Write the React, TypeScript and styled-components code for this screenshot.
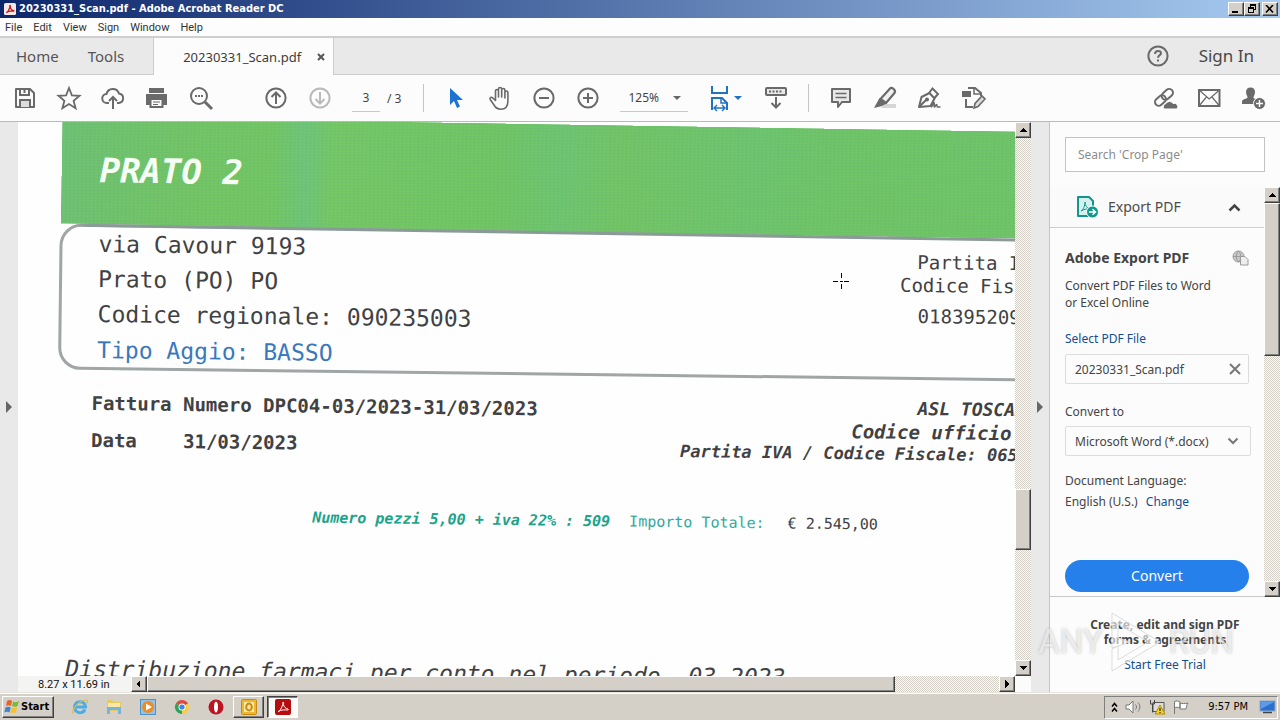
import React from "react";
import styled, { createGlobalStyle, css } from "styled-components";

const ui = `"Noto Sans", "Open Sans", sans-serif`;
const sys = `"DejaVu Sans Condensed", "Noto Sans", sans-serif`;
const face = "#d4d0c8";
const grey = "#6a6a6a";

const Global = createGlobalStyle`
  * { box-sizing: border-box; }
  body { margin: 0; font-family: ${ui}; color: #444; background: #fcfcfc; overflow: hidden; }
  button, input, select { font: inherit; color: inherit; }
  a { text-decoration: none; }
  p, h1, h2 { margin: 0; }
`;

const raised = css`
  background: ${face};
  border: 1px solid;
  border-color: #fff #404040 #404040 #fff;
  box-shadow: inset -1px -1px 0 #808080;
`;

const Window = styled.div`
  min-height: 100vh;
  display: flex;
  flex-direction: column;
`;

/* ---------- window chrome ---------- */
const TitleBar = styled.header`
  height: 18px;
  display: flex;
  align-items: center;
  gap: 3px;
  padding: 0 2px 0 4px;
  background: linear-gradient(to right, #0c266c, #a6caf0);
`;
const Title = styled.h1`
  flex: 1;
  font: bold 11px/18px ${sys};
  color: #fff;
  white-space: nowrap;
`;
const WinButtons = styled.div`
  display: flex;
  button:last-child { margin-left: 2px; }
`;
const WinButton = styled.button`
  ${raised}
  width: 16px;
  height: 14px;
  padding: 0;
  display: flex;
  align-items: center;
  justify-content: center;
`;
const MenuBar = styled.nav`
  height: 20px;
  display: flex;
  gap: 11px;
  padding-left: 5px;
  background: #fdfdfd;
  border-bottom: 2px solid #cfcfcf;
`;
const MenuItem = styled.button`
  padding: 0;
  border: 0;
  background: none;
  font: 11px/20px Roboto, sans-serif;
  color: #333;
`;
const TabBar = styled.div`
  height: 37px;
  display: flex;
  align-items: stretch;
  background: #e9e9e9;
  border-bottom: 1px solid #cdcdcd;
`;
const TopTab = styled.button<{ $gap?: number }>`
  padding: 0;
  margin-left: ${(p) => p.$gap ?? 0}px;
  border: 0;
  background: none;
  font: 15px/36px ${ui};
  color: #555;
`;
const DocTab = styled.div`
  width: 181px;
  margin: 0 auto 0 29px;
  height: 37px;
  padding: 0 8px 0 29px;
  display: flex;
  align-items: center;
  justify-content: space-between;
  background: #fcfcfc;
  border: solid #cdcdcd;
  border-width: 0 1px;
  font: 13px/36px ${ui};
  color: #3c3c3c;
`;
const Plain = styled.button`
  padding: 0;
  border: 0;
  background: none;
  display: flex;
  align-items: center;
  justify-content: center;
`;
const SignIn = styled.button`
  padding: 0;
  margin: 0 26px 0 30px;
  border: 0;
  background: none;
  font: 17px/36px ${ui};
  color: #484848;
`;

/* ---------- toolbar ---------- */
const Toolbar = styled.div`
  height: 47px;
  display: flex;
  align-items: center;
  padding: 0 5px 0 3px;
  background: #fcfcfc;
  border-bottom: 1px solid #b9b9b9;
`;
const Group = styled.div<{ $left?: number }>`
  display: flex;
  align-items: center;
  margin-left: ${(p) => p.$left ?? 0}px;
`;
const RightGroup = styled(Group)`
  margin-left: auto;
`;
const ToolButton = styled.button`
  width: 44px;
  height: 40px;
  padding: 0;
  border: 0;
  background: none;
  display: flex;
  align-items: center;
  justify-content: center;
`;
const Divider = styled.i`
  width: 1px;
  height: 28px;
  background: #c4c4c4;
`;
const PageInput = styled.input`
  width: 28px;
  height: 28px;
  padding: 0;
  border: 0;
  border-bottom: 1px solid #c8c8c8;
  background: none;
  font: 12px/27px ${ui};
  text-align: center;
`;
const PageTotal = styled.span`
  margin: 0 22px 0 7px;
  font: 12px/27px ${ui};
`;
const ZoomSelect = styled.label`
  display: flex;
  align-items: center;
  width: 68px;
  height: 28px;
  margin: 0 12px 0 10px;
  border-bottom: 1px solid #c8c8c8;
  select {
    appearance: none;
    flex: 1;
    min-width: 0;
    border: 0;
    padding: 0 0 0 8px;
    background: none;
    font: 12px/24px ${ui};
  }
`;
const Caret = styled.i`
  margin-right: 7px;
  border: 4px solid transparent;
  border-top-color: #666;
  border-bottom: 0;
`;

/* ---------- body ---------- */
const Body = styled.main`
  flex: 1;
  display: flex;
  min-height: 0;
`;
const LeftStrip = styled.button`
  width: 18px;
  padding: 0;
  border: 0;
  background: #e9e9e9;
  display: flex;
  align-items: center;
  justify-content: center;
`;
const RightStrip = styled(LeftStrip)`
  width: 19px;
  border-right: 1px solid #c4c4c4;
`;
const Viewer = styled.section`
  flex: 1;
  min-width: 0;
  display: flex;
  flex-direction: column;
`;
const ViewArea = styled.div`
  flex: 1;
  display: flex;
  min-height: 0;
`;
const PageView = styled.div`
  flex: 1;
  height: 554px;
  min-width: 0;
  overflow: hidden;
  position: relative;
  background: #fefefe;
`;
const StatusRow = styled.div`
  height: 16px;
  display: flex;
  background: #f4f4f2;
`;
const PageSize = styled.span`
  width: 113px;
  padding-left: 20px;
  font: 11px/18px Roboto, sans-serif;
  color: #111;
  white-space: nowrap;
`;
const Corner = styled.i`
  width: 16px;
  background: #fbfbfb;
`;

const Track = styled.div<{ $dir: "v" | "h" }>`
  display: flex;
  flex: ${(p) => (p.$dir === "h" ? "1" : "none")};
  flex-direction: ${(p) => (p.$dir === "v" ? "column" : "row")};
  ${(p) => (p.$dir === "v" ? "width: 16px;" : "height: 16px;")}
  background: repeating-conic-gradient(${face} 0 25%, #fbfaf7 0 50%) 0 0 / 2px 2px;
`;
const ScrollButton = styled.button`
  ${raised}
  width: 16px;
  height: 16px;
  padding: 0;
  flex: none;
  display: flex;
  align-items: center;
  justify-content: center;
`;
const Thumb = styled.div<{ $grow: number }>`
  ${raised}
  flex: ${(p) => p.$grow} 1 0;
`;
const Space = styled.div<{ $grow: number }>`
  flex: ${(p) => p.$grow} 1 0;
`;

/* ---------- scanned page ---------- */
const Sheet = styled.article`
  width: 120%;
  transform: rotate(0.7deg);
  transform-origin: 0 0;
  font-family: "DejaVu Sans Mono", monospace;
  color: #414143;
  white-space: nowrap;
  padding: 2px 0 0 43px;
`;
const Band = styled.div`
  position: relative;
  z-index: 1;
  height: 110px;
  margin: -8px 0 0 1px;
  padding: 33px 0 0 38px;
  transform: rotate(0.2deg);
  transform-origin: 0 100%;
  border-bottom: 3px solid;
  border-image: linear-gradient(to right, transparent 16px, #8a9a97 30px) 3;
  background:
    repeating-linear-gradient(0deg, rgba(60, 140, 110, 0.08) 0 1px, transparent 1px 3px),
    repeating-linear-gradient(90deg, rgba(60, 150, 120, 0.08) 0 1px, transparent 1px 4px),
    linear-gradient(90deg, #70c273 0, #74c566 120px, #74c763 210px, #70c57a 244px, #76c866 270px, #72c663 430px, #70c571 500px, #74c566 560px, #6fc56e 690px, #71c567 790px, #70c569 100%);
  background-clip: padding-box;
`;
const BandTitle = styled.h2`
  font-size: 34px;
  line-height: 40px;
  font-weight: bold;
  font-style: italic;
  color: #f6fff4;
`;
const InfoBox = styled.div`
  display: flex;
  height: 146px;
  margin-top: -3px;
  border: 3px solid #a0a5a6;
  border-radius: 22px;
  padding-left: 36px;
`;
const Address = styled.div`
  width: 802px;
  font-size: 23px;
  line-height: 35px;
`;
const Aggio = styled.p`
  margin-top: 1px;
  color: #3a78bd;
`;
const TaxInfo = styled.div`
  padding-top: 14px;
  font-size: 19px;
  line-height: 23px;
`;
const Indent = styled.p<{ $by?: number; $top?: number; $size?: number; $line?: number }>`
  margin-top: ${(p) => p.$top ?? 0}px;
  padding-left: ${(p) => p.$by ?? 0}px;
  font-size: ${(p) => (p.$size ? `${p.$size}px` : "inherit")};
  line-height: ${(p) => (p.$line ? `${p.$line}px` : "inherit")};
`;
const InvoiceRow = styled.div`
  display: flex;
  margin-top: 15px;
  padding-left: 34px;
  font-weight: bold;
`;
const Invoice = styled.dl`
  width: 589px;
  margin: 0;
  display: grid;
  grid-template-columns: 92px 1fr;
  font-size: 19px;
  line-height: 37px;
  dt, dd { margin: 0; }
`;
const Wide = styled.dt`
  grid-column: 1 / -1;
`;
const Office = styled.div`
  padding-top: 2px;
  font-style: italic;
`;
const Totals = styled.div`
  display: flex;
  margin-top: 46px;
  padding-left: 256px;
  font-size: 15px;
  line-height: 20px;
`;
const Pieces = styled.em`
  font-weight: bold;
  color: #1ba38b;
`;
const Amount = styled.span<{ $left: number; $teal?: boolean }>`
  margin-left: ${(p) => p.$left}px;
  color: ${(p) => (p.$teal ? "#33a99c" : "inherit")};
`;
const Period = styled.p`
  margin-top: 129px;
  padding-left: 11px;
  font-size: 23px;
  line-height: 30px;
  font-style: italic;
  white-space: pre;
`;
const Cursor = styled.svg`
  position: absolute;
  left: 814px;
  top: 150px;
`;

/* ---------- tools panel ---------- */
const Panel = styled.aside`
  position: relative;
  width: 230px;
  display: flex;
  flex-direction: column;
  background: #fcfcfc;
`;
const Search = styled.input`
  height: 35px;
  margin: 15px 15px 15px;
  padding: 0 12px;
  border: 1px solid #c3c3c3;
  background: #fff;
  font: 12px/33px ${ui};
  &::placeholder { color: #8c8c8c; opacity: 1; }
`;
const PanelScroll = styled.div`
  display: flex;
  height: 410px;
`;
const PanelContent = styled.div`
  flex: 1;
  display: flex;
  flex-direction: column;
  border-bottom: 1px solid #c8c8c8;
`;
const ExportHead = styled.button`
  height: 41px;
  padding: 0 23px 0 26px;
  display: flex;
  align-items: center;
  gap: 9px;
  border: 0;
  border-bottom: 1px solid #cfcfcf;
  background: #fafafa;
  font: 14px/20px ${ui};
  color: #4b4b4b;
  span { flex: 1; text-align: left; }
`;
const ExportBody = styled.div`
  flex: 1;
  display: flex;
  flex-direction: column;
  padding: 21px 15px 4px;
  font: 12px/17px ${ui};
`;
const HeadRow = styled.div`
  display: flex;
  justify-content: space-between;
  align-items: center;
  h2 { font: bold 14px/18px ${ui}; }
`;
const Intro = styled.p`
  margin-top: 10px;
`;
const Link = styled.a<{ $top?: number }>`
  display: inline-block;
  margin-top: ${(p) => p.$top ?? 0}px;
  color: #114f93;
`;
const FileBox = styled.div`
  height: 30px;
  margin-top: 7px;
  padding: 0 7px 0 9px;
  display: flex;
  align-items: center;
  justify-content: space-between;
  border: 1px solid #dcdcdc;
  border-radius: 2px;
`;
const FieldLabel = styled.label`
  margin-top: 19px;
`;
const SelectWrap = styled.div`
  position: relative;
  height: 30px;
  margin: 6px -2px 0 0;
  svg { position: absolute; right: 12px; top: 11px; pointer-events: none; }
  select {
    appearance: none;
    width: 100%;
    height: 30px;
    padding: 0 0 0 9px;
    border: 1px solid #dcdcdc;
    border-radius: 2px;
    background: none;
  }
`;
const Language = styled.p`
  margin-top: 14px;
  line-height: 21px;
  a { margin-left: 5px; }
`;
const Convert = styled.button`
  height: 32px;
  margin-top: auto;
  border: 0;
  border-radius: 16px;
  background: #2680eb;
  color: #fff;
  font: 14px/30px ${ui};
`;
const Promo = styled.div`
  padding-top: 20px;
  text-align: center;
  font: 12px/15px ${ui};
  strong { display: block; }
  a { margin-top: 10px; }
`;
const Watermark = styled.div`
  position: absolute;
  right: 46px;
  bottom: 19px;
  display: flex;
  align-items: center;
  gap: 7px;
  pointer-events: none;
  font: 33px/46px Roboto, sans-serif;
  color: rgba(255, 255, 255, 0.6);
  text-shadow: 0 0 3px rgba(130, 130, 130, 0.5);
`;

/* ---------- taskbar ---------- */
const TaskBar = styled.footer`
  height: 28px;
  display: flex;
  align-items: center;
  padding: 1px 2px 0;
  background: ${face};
  border-top: 1px solid #e6e3dc;
  box-shadow: inset 0 1px 0 #fff;
`;
const Start = styled.button`
  ${raised}
  width: 52px;
  height: 22px;
  margin-right: 9px;
  padding: 0;
  display: flex;
  align-items: center;
  font: bold 11px/18px ${sys};
  color: #000;
`;
const Launch = styled.button`
  width: 34px;
  height: 22px;
  padding: 0;
  border: 0;
  background: none;
  display: flex;
  align-items: center;
  justify-content: center;
`;
const TaskButton = styled.button<{ $active?: boolean }>`
  ${raised}
  ${(p) =>
    p.$active &&
    css`
      background: #fbfbfa;
      border-color: #404040 #fff #fff #404040;
      box-shadow: inset 1px 1px 0 #808080;
    `}
  width: 31px;
  height: 22px;
  margin-right: 3px;
  padding: 0;
  display: flex;
  align-items: center;
  justify-content: center;
`;
const Tray = styled.div`
  height: 23px;
  margin-left: auto;
  padding: 0 1px 0 6px;
  display: flex;
  align-items: center;
  gap: 7px;
  border: 1px solid;
  border-color: #808080 #fff #fff #808080;
  font: 11px/20px ${sys};
  color: #000;
  time { margin: 0 4px 0 12px; white-space: nowrap; }
`;

/* ---------- icons ---------- */
type IconProps = { color?: string; children: React.ReactNode };
const Icon = ({ color = grey, children }: IconProps) => (
  <svg width="26" height="26" viewBox="0 0 26 26" fill="none" stroke={color} strokeWidth="2" aria-hidden="true">
    {children}
  </svg>
);
const Tri = ({ dir }: { dir: "up" | "down" | "left" | "right" }) => {
  const d = { up: "M4 1 8 5H0z", down: "M0 1h8L4 5z", left: "M5 0v8L1 4z", right: "M2 0v8l4-4z" }[dir];
  return (
    <svg width="8" height={dir === "up" || dir === "down" ? 6 : 8} aria-hidden="true" shapeRendering="crispEdges">
      <path d={d} fill="#000" />
    </svg>
  );
};
const Acrobat = ({ size, tile }: { size: number; tile?: boolean }) => (
  <svg width={size} height={size} viewBox="0 0 16 16" aria-hidden="true">
    <rect width="16" height="16" rx="2" fill={tile ? "#b50d0d" : "#f3e9e8"} />
    <path
      d="M3 12.600c1.800-.4 3.600-3.400 4.700-7C8 4.100 7.500 3 8 3s.9 1.200.5 2.600C8.800 8 11 9.800 13 10c.6.200.5 1-.4 1-2.600 0-6.100-.8-9.200 1.600z"
      fill="none"
      stroke={tile ? "#fff" : "#c71a1a"}
      strokeWidth={tile ? 1 : 1.6}
    />
  </svg>
);

const tools: Record<string, React.ReactNode> = {
  save: (
    <>
      <path d="M4 4h14l4 4v14H4z" strokeLinejoin="round" />
      <path d="M8 4v6h9V4M12.500 5v3" />
      <path d="M8 22v-7h10v7" fill="#ddd" />
    </>
  ),
  star: <path d="M13 3l2.900 7.300 7.600.5-5.900 4.900 2 7.500L13 19l-6.600 4.200 2-7.500-5.900-4.900 7.600-.5z" strokeWidth="1.800" />,
  cloud: (
    <>
      <path d="M9 18H7a4.500 4.500 0 0 1-.5-9 6.500 6.500 0 0 1 12.500-.5A4.800 4.800 0 0 1 19 18h-2" />
      <path d="M13 24V12M9 16l4-4 4 4" />
    </>
  ),
  print: (
    <>
      <path d="M2 9h21v11h-4v-4H6v4H2z" fill={grey} stroke="none" />
      <path d="M6 8V4h13v4" fill={grey} />
      <path d="M1 8.500h23" stroke="#fcfcfc" strokeWidth="1" />
      <path d="M6.500 14h12v8h-12z" fill="#fcfcfc" />
      <path d="M9 17h7M9 19.500h5" strokeWidth="1" />
    </>
  ),
  search: (
    <>
      <circle cx="11" cy="11" r="8" />
      <path d="M17 17l7 7" strokeWidth="3" />
      <path d="M7 11h2M10 11h2M13 11h2" />
    </>
  ),
  up: (
    <>
      <circle cx="13" cy="13" r="9.600" />
      <path d="M13 19V8M8.500 12 13 7.500l4.500 4.500" />
    </>
  ),
  down: (
    <>
      <circle cx="13" cy="13" r="9.600" />
      <path d="M13 7v11M8.500 14l4.500 4.500 4.500-4.500" />
    </>
  ),
  hand: (
    <path
      d="M8.500 15.500V6c0-2 3-2 3 0v6-8c0-2 3.200-2 3.200 0v8-7c0-2 3.200-2 3.200 0v8-5.500c0-2 3-2 3 0V16c0 5-2.600 8.200-7 8.200-3.700 0-5.500-1.700-6.900-4.200l-3.800-5.500c-.9-1.900 1.200-3 2.700-1.400z"
      strokeWidth="1.600"
      strokeLinejoin="round"
    />
  ),
  minus: (
    <>
      <circle cx="13" cy="13" r="9.600" />
      <path d="M8 13h10" />
    </>
  ),
  plus: (
    <>
      <circle cx="13" cy="13" r="9.600" />
      <path d="M8 13h10M13 8v10" />
    </>
  ),
  keyboard: (
    <>
      <rect x="3" y="3" width="20" height="7" rx="1" fill="#e8e8e8" />
      <path d="M6 6.500h14" strokeDasharray="2 1.500" />
      <path d="M13 12v10M8.500 18l4.500 4.500 4.500-4.500" />
    </>
  ),
  comment: (
    <>
      <path d="M4 4h18v13h-8l-4 5v-5H4z" fill="#e8e8e8" strokeLinejoin="round" />
      <path d="M7.500 8.500h11M7.500 12.500h11" strokeWidth="1.500" />
    </>
  ),
  marker: (
    <>
      <path d="M12 19h12v4H9z" fill="#d6d6d6" stroke="none" />
      <path d="M8.500 14 18 3.500c1.700-1.700 6.500 1.500 4.500 4.500L14 18z" strokeLinejoin="round" fill="#f0f0f0" strokeWidth="2.200" />
      <path d="M7.500 13l7 5.500-4.500 2.500-8 2z" fill={grey} stroke="none" />
    </>
  ),
  sign: (
    <>
      <path d="M3 22 5.500 12l8-4 5 5.500-4 7.500z" strokeLinejoin="round" />
      <path d="M3 22l7-7M13 8l3.500-4.500L22 9l-3.500 4" />
      <circle cx="11" cy="14.500" r="1" fill={grey} />
      <path d="M15 22c2 0 2-5 3-4.500s-.5 4.500.5 4.500 1-2.500 2-2.500 0 2.500 1 2.500h3" strokeWidth="1.500" />
    </>
  ),
  edit: (
    <>
      <path d="M8 3h7l6 5v3M6 14v8h7" />
      <path d="M14 4v5h6" strokeWidth="1.500" />
      <path d="M2 6h9v6H2z" fill={grey} stroke="none" />
      <path d="M14 23l1-4.500 7-7.500 3 3-7 7.500z" fill="#ddd" strokeWidth="1.600" />
    </>
  ),
  link: (
    <>
      <g transform="rotate(-42 12 12)">
        <rect x="1" y="8.500" width="12" height="7.500" rx="3.700" />
        <rect x="10" y="8.500" width="12.500" height="7.500" rx="3.700" />
      </g>
      <path d="M12 24a3.500 3.500 0 0 1 2-5.500 4 4 0 0 1 7 0A3.500 3.500 0 0 1 25 24z" fill={grey} stroke="#fcfcfc" strokeWidth="1" />
    </>
  ),
  mail: (
    <>
      <rect x="3" y="5" width="20.500" height="16" />
      <path d="M3 5l10.200 9L23.500 5M3 21l7.500-9M23.500 21 16 12" strokeWidth="1.200" />
    </>
  ),
  person: (
    <>
      <path d="M10.500 2.500c3 0 4.500 2 4.500 4.500S13.700 11 13.500 12.500c0 1.500 4.500 1.500 5.500 3.500v3H2v-2c0-3.500 5.500-3 5.500-4.500S6 9.500 6 7s1.500-4.500 4.500-4.500z" fill={grey} stroke="none" />
      <circle cx="19.500" cy="18.500" r="6" fill={grey} stroke="#fcfcfc" strokeWidth="1" />
      <path d="M16 18.500h7M19.500 15v7" stroke="#fff" strokeWidth="1.400" />
    </>
  ),
};
const Tool = ({ name, color }: { name: string; color?: string }) => (
  <ToolButton aria-label={name}>
    <Icon color={color}>{tools[name]}</Icon>
  </ToolButton>
);

const FitIcon = () => (
  <svg width="34" height="28" viewBox="0 0 34 28" fill="none" stroke="#2272c3" strokeWidth="2" aria-hidden="true">
    <path d="M3 2v7h15V2" />
    <path d="M3 26V14h10l5 5v7" />
    <path d="M12 14v5h6" strokeWidth="1.500" />
    <path d="M5 24h11M8 21l-3 3 3 3M13 21l3 3-3 3" strokeWidth="1.400" />
    <path d="M25 12h8l-4 4z" fill="#2272c3" stroke="none" />
  </svg>
);

type BarProps = { dir: "v" | "h"; before: number; thumb: number; after: number };
const ScrollBar = ({ dir, before, thumb, after }: BarProps) => (
  <Track $dir={dir}>
    <ScrollButton aria-label="Scroll back">
      <Tri dir={dir === "v" ? "up" : "left"} />
    </ScrollButton>
    <Space $grow={before} />
    <Thumb $grow={thumb} />
    <Space $grow={after} />
    <ScrollButton aria-label="Scroll forward">
      <Tri dir={dir === "v" ? "down" : "right"} />
    </ScrollButton>
  </Track>
);

export default function App() {
  return (
    <Window>
      <Global />
      <TitleBar>
        <Acrobat size={12} />
        <Title>20230331_Scan.pdf - Adobe Acrobat Reader DC</Title>
        <WinButtons>
          <WinButton aria-label="Minimize">
            <svg width="10" height="8"><path d="M1 6h6v2H1z" /></svg>
          </WinButton>
          <WinButton aria-label="Restore">
            <svg width="10" height="10" fill="none" stroke="#000" shapeRendering="crispEdges">
              <path d="M3.500 3V.5h5v5H7M3 1.500h6M1.500 3.500h5v5h-5zM1 4.500h6" />
            </svg>
          </WinButton>
          <WinButton aria-label="Close">
            <svg width="10" height="8"><path d="M1 0l7 7.500M8 0 1 7.500" stroke="#000" strokeWidth="1.600" /></svg>
          </WinButton>
        </WinButtons>
      </TitleBar>

      <MenuBar>
        {["File", "Edit", "View", "Sign", "Window", "Help"].map((m) => (
          <MenuItem key={m}>{m}</MenuItem>
        ))}
      </MenuBar>

      <TabBar>
        <TopTab $gap={16}>Home</TopTab>
        <TopTab $gap={29}>Tools</TopTab>
        <DocTab>
          20230331_Scan.pdf
          <Plain aria-label="Close tab">
            <svg width="8" height="8"><path d="M1 1l6 6M7 1 1 7" stroke="#555" strokeWidth="2" /></svg>
          </Plain>
        </DocTab>
        <Plain aria-label="Help">
          <svg width="22" height="22" viewBox="0 0 22 22" fill="none" stroke={grey} strokeWidth="2">
            <circle cx="11" cy="11" r="9.600" />
            <path d="M8 9c0-4 6-4 6-.8 0 2-3 2-3 4.600M11 14.500v2" />
          </svg>
        </Plain>
        <SignIn>Sign In</SignIn>
      </TabBar>

      <Toolbar>
        <Group>
          <Tool name="save" />
          <Tool name="star" />
          <Tool name="cloud" />
          <Tool name="print" />
          <Tool name="search" />
        </Group>
        <Group $left={31}>
          <Tool name="up" />
          <Tool name="down" color="#b9b9b9" />
        </Group>
        <Group $left={10}>
          <PageInput aria-label="Page number" defaultValue="3" />
          <PageTotal>/ 3</PageTotal>
        </Group>
        <Divider />
        <Group $left={10}>
          <ToolButton aria-label="Select">
            <svg width="16" height="22" viewBox="0 0 16 22">
              <path d="M2 1v17l4-4 3 7 3-1.500-3-6.500h6z" fill="#1c73d0" />
            </svg>
          </ToolButton>
          <Tool name="hand" />
          <Tool name="minus" />
          <Tool name="plus" />
        </Group>
        <ZoomSelect>
          <select aria-label="Zoom">
            <option>125%</option>
          </select>
          <Caret />
        </ZoomSelect>
        <Group $left={4}>
          <ToolButton aria-label="Fit width">
            <FitIcon />
          </ToolButton>
        </Group>
        <Group $left={6}>
          <Tool name="keyboard" />
        </Group>
        <Group $left={10}>
          <Divider />
        </Group>
        <Group $left={10}>
          <Tool name="comment" />
          <Tool name="marker" />
          <Tool name="sign" />
          <Tool name="edit" />
        </Group>
        <RightGroup>
          <Tool name="link" />
          <Tool name="mail" />
          <Tool name="person" />
        </RightGroup>
      </Toolbar>

      <Body>
        <LeftStrip aria-label="Open navigation pane">
          <svg width="6" height="12"><path d="M0 0v12l6-6z" fill="#666" /></svg>
        </LeftStrip>
        <Viewer>
          <ViewArea>
            <PageView>
              <Sheet>
                <Band>
                  <BandTitle>PRATO 2</BandTitle>
                </Band>
                <InfoBox>
                  <Address>
                    <p>via Cavour 9193</p>
                    <p>Prato (PO) PO</p>
                    <p>Codice regionale: 090235003</p>
                    <Aggio>Tipo Aggio: BASSO</Aggio>
                  </Address>
                  <TaxInfo>
                    <Indent $by={17}>Partita IVA</Indent>
                    <Indent>Codice Fiscale</Indent>
                    <Indent $by={18} $top={8}>018395209</Indent>
                  </TaxInfo>
                </InfoBox>
                <InvoiceRow>
                  <Invoice>
                    <Wide>Fattura Numero DPC04-03/2023-31/03/2023</Wide>
                    <dt>Data</dt>
                    <dd>31/03/2023</dd>
                  </Invoice>
                  <Office>
                    <Indent $by={237} $size={18} $line={24}>ASL TOSCANA</Indent>
                    <Indent $by={171} $size={19} $line={22}>Codice ufficio</Indent>
                    <Indent $size={17} $line={22}>Partita IVA / Codice Fiscale: 065</Indent>
                  </Office>
                </InvoiceRow>
                <Totals>
                  <Pieces>Numero pezzi 5,00 + iva 22% : 509</Pieces>
                  <Amount $left={19} $teal>Importo Totale:</Amount>
                  <Amount $left={23}>€ 2.545,00</Amount>
                </Totals>
                <Period>Distribuzione farmaci per conto nel periodo  03 2023</Period>
              </Sheet>
              <Cursor width="18" height="18" stroke="#000" shapeRendering="crispEdges" aria-hidden="true">
                <path d="M1 9.500h5M8 9.500h3M12 9.500h5M9.500 1v5M9.500 12v5" />
              </Cursor>
            </PageView>
            <ScrollBar dir="v" before={352} thumb={60} after={110} />
          </ViewArea>
          <StatusRow>
            <PageSize>8.27 x 11.69 in</PageSize>
            <ScrollBar dir="h" before={0} thumb={748} after={104} />
            <Corner />
          </StatusRow>
        </Viewer>
        <RightStrip aria-label="Collapse tools pane">
          <svg width="6" height="12"><path d="M0 0v12l6-6z" fill="#666" /></svg>
        </RightStrip>

        <Panel>
          <Search placeholder="Search 'Crop Page'" aria-label="Search tools" />
          <PanelScroll>
            <PanelContent>
              <ExportHead>
                <svg width="23" height="24" viewBox="0 0 23 24" fill="none" stroke="#12968b" strokeWidth="2" aria-hidden="true">
                  <path d="M2 2h11l4 4v15H2z" fill="#d5f1ee" strokeLinejoin="round" />
                  <path d="M5 16c2-1 4-5 4-9 0 4 2 6 5 7-4 0-6 0-9 2z" strokeWidth="1" />
                  <circle cx="16.500" cy="17" r="6" fill="#12968b" stroke="#fafafa" strokeWidth="1" />
                  <path d="M13 17h6M16.500 14.200l3 2.800-3 2.800" stroke="#fff" strokeWidth="1.500" />
                </svg>
                <span>Export PDF</span>
                <svg width="13" height="9" fill="none" stroke="#444" strokeWidth="2.500" aria-hidden="true">
                  <path d="M1.500 7.500l5-5 5 5" />
                </svg>
              </ExportHead>
              <ExportBody>
                <HeadRow>
                  <h2>Adobe Export PDF</h2>
                  <svg width="17" height="16" viewBox="0 0 17 16" fill="none" stroke="#9b9b9b" aria-hidden="true">
                    <circle cx="6.500" cy="6.500" r="5.500" fill="#c9c9c9" />
                    <path d="M1 6.500h11M6.500 1c-3 3-3 8 0 11M6.500 1c3 3 3 8 0 11" />
                    <path d="M8.500 6.500h4.500l3 3v5.500H8.500z" fill="#eee" />
                  </svg>
                </HeadRow>
                <Intro>
                  Convert PDF Files to Word
                  <br />
                  or Excel Online
                </Intro>
                <div>
                  <Link href="#select" $top={19}>Select PDF File</Link>
                </div>
                <FileBox>
                  20230331_Scan.pdf
                  <Plain aria-label="Remove file">
                    <svg width="12" height="12"><path d="M1 1l10 10M11 1 1 11" stroke="#777" strokeWidth="2" /></svg>
                  </Plain>
                </FileBox>
                <FieldLabel htmlFor="format">Convert to</FieldLabel>
                <SelectWrap>
                  <select id="format">
                    <option>Microsoft Word (*.docx)</option>
                  </select>
                  <svg width="12" height="9" fill="none" stroke="#777" strokeWidth="2"><path d="M1.500 1.500 6 6l4.500-4.500" /></svg>
                </SelectWrap>
                <Language>
                  Document Language:
                  <br />
                  English (U.S.) <Link href="#language">Change</Link>
                </Language>
                <Convert>Convert</Convert>
              </ExportBody>
            </PanelContent>
            <ScrollBar dir="v" before={0} thumb={152} after={226} />
          </PanelScroll>
          <Promo>
            <strong>Create, edit and sign PDF</strong>
            <strong>forms &amp; agreements</strong>
            <Link href="#trial">Start Free Trial</Link>
          </Promo>
          <Watermark>
            ANY
            <svg width="52" height="62" viewBox="0 0 52 62" fill="rgba(255,255,255,.6)" stroke="#dcdcdc" strokeWidth="1">
              <path d="M2 2l48 29L2 60V38l6-3v14l30-18L8 13v14l12 4-18 6z" />
            </svg>
            RUN
          </Watermark>
        </Panel>
      </Body>

      <TaskBar>
        <Start>
          <svg width="18" height="16" viewBox="0 0 18 16" aria-hidden="true">
            <path d="M4 2c2-1.500 4-1 5 0L8 7C6.500 6 4.500 6 3 7z" fill="#e8622c" />
            <path d="M10 2.500c2 1 4 .8 6-.5l-1.500 5c-2 1.200-4 1-5.500 0z" fill="#7fb93c" />
            <path d="M2.500 8.500c2-1.200 4-1 5.200 0l-1.200 5c-1.500-1-3.500-1-5.200 0z" fill="#3d86d0" />
            <path d="M8.800 8.500c1.700 1 3.500.9 5.500-.3l-1.400 5c-2 1.200-4 1-5.500 0z" fill="#f5c131" />
          </svg>
          Start
        </Start>
        <Launch aria-label="Internet Explorer">
          <svg width="18" height="18" viewBox="0 0 18 18" fill="none">
            <path d="M14 11.500A5.500 5.500 0 1 1 14.500 9H5" stroke="#49aee8" strokeWidth="3" />
            <path d="M2.500 15.500C-1 13 8 2 15 2c2.500 0 1.500 2.500 1 3.500" stroke="#e8b93c" strokeWidth="1.200" />
          </svg>
        </Launch>
        <Launch aria-label="Explorer">
          <svg width="18" height="18" viewBox="0 0 18 18">
            <path d="M2 2h5l1 2h8v9H2z" fill="#e9c95c" />
            <path d="M3 5h12v6H3z" fill="#f8e9a8" />
            <path d="M2 9h14v7h-3v-4H5v4H2z" fill="#74b4de" />
          </svg>
        </Launch>
        <Launch aria-label="Media Player">
          <svg width="16" height="16" viewBox="0 0 16 16">
            <rect x=".5" y=".5" width="15" height="15" fill="#8ec3ea" stroke="#4e92c6" />
            <circle cx="8" cy="8" r="6" fill="#ef8b22" />
            <path d="M6 4.500v7l6-3.500z" fill="#fff" />
          </svg>
        </Launch>
        <Launch aria-label="Chrome">
          <svg width="16" height="16" viewBox="0 0 16 16">
            <path d="M8 8 1.900 4.500A7 7 0 0 1 14.100 4.500z" fill="#dd4b3e" />
            <path d="M8 8 1.900 4.500A7 7 0 0 0 8 15z" fill="#2fa35a" />
            <path d="M8 8 8 15A7 7 0 0 0 14.100 4.500z" fill="#f7cd3b" />
            <circle cx="8" cy="8" r="3.500" fill="#fff" />
            <circle cx="8" cy="8" r="2.600" fill="#3f83e6" />
          </svg>
        </Launch>
        <Launch aria-label="Opera">
          <svg width="16" height="16" viewBox="0 0 16 16">
            <circle cx="8" cy="8" r="7.500" fill="#bb1320" />
            <ellipse cx="8" cy="8" rx="2" ry="5.500" fill="#fff" />
          </svg>
        </Launch>
        <TaskButton aria-label="Outlook">
          <svg width="16" height="16" viewBox="0 0 16 16" fill="none">
            <rect x=".5" y=".5" width="15" height="15" rx="1" fill="#efb72d" stroke="#c48a18" />
            <path d="M3 3h10v10H3z" fill="#fbe8a6" />
            <ellipse cx="8" cy="8" rx="2.800" ry="3.500" stroke="#c98a12" strokeWidth="2" />
          </svg>
        </TaskButton>
        <TaskButton $active aria-label="Adobe Acrobat Reader">
          <Acrobat size={16} tile />
        </TaskButton>
        <Tray>
          <svg width="7" height="11" fill="none" stroke="#000" strokeWidth="1.500"><path d="M1 4.500l2.500-3 2.500 3M1 9.500l2.500-3 2.500 3" /></svg>
          <svg width="17" height="14" fill="#fff" stroke="#777">
            <path d="M1 5h3l4-4v12L4 9H1z" />
            <path d="M10.500 4.500c1.300 1.500 1.300 3.500 0 5M13 2.500c2.500 3 2.500 6 0 9" fill="none" />
          </svg>
          <svg width="17" height="16">
            <path d="M4 3.500h11v9H4z" fill="#dedede" stroke="#555" />
            <path d="M1.500 1v4h4V1M3.500 5v8.500" fill="none" stroke="#444" />
            <path d="M11 6l5 9H6z" fill="#f6d21f" stroke="#b58b00" />
            <path d="M11 9v3M11 13v1" stroke="#000" />
          </svg>
          <svg width="16" height="15" fill="#fff" stroke="#777">
            <path d="M1.500 14V1.500c2-1 4-.5 5.500.5v6c-1.500-1-3.500-1-5.500 0M7 3c2 .8 5 .8 8 0-1.500 2-1.500 4-2 6H7z" />
          </svg>
          <time>9:57 PM</time>
          <svg width="17" height="14">
            <rect x="1" y="1" width="15" height="10" fill="#2b6fcf" stroke="#8fa9c9" />
            <path d="M2 2h13L2 9z" fill="#5d9be8" />
            <path d="M4 12.500h9" stroke="#444" strokeWidth="1.500" />
          </svg>
        </Tray>
      </TaskBar>
    </Window>
  );
}
